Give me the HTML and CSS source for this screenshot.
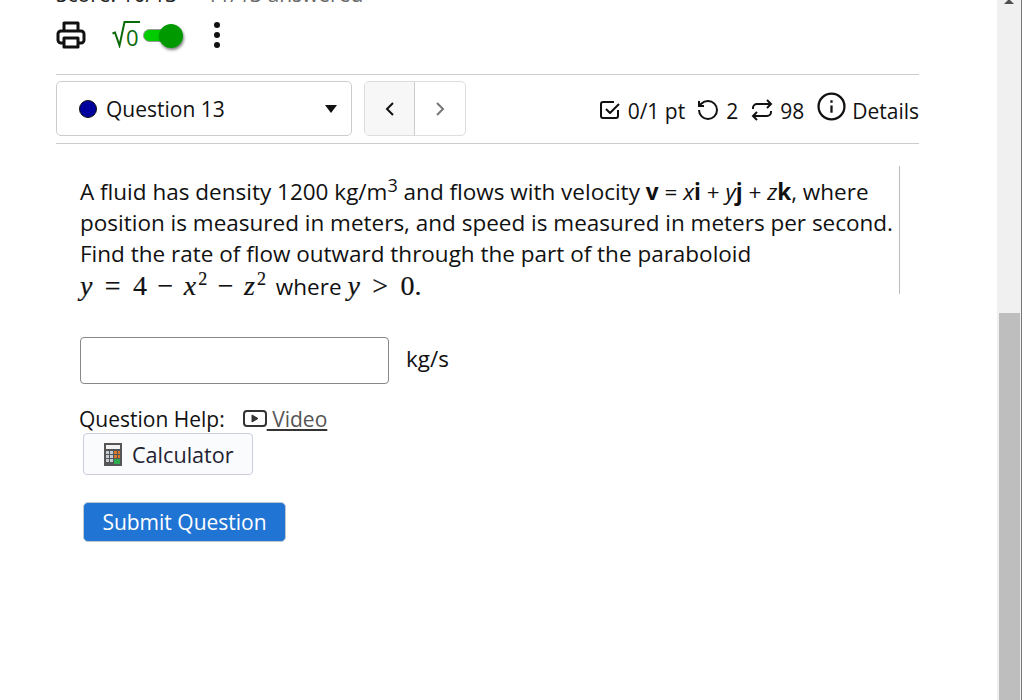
FILE: index.html
```html
<!DOCTYPE html>
<html lang="en">
<head>
    <meta charset="UTF-8">
    <meta name="viewport" content="width=device-width, initial-scale=1.0">
    <title>Question 13</title>
    <link rel="stylesheet" href="styles.css">
</head>
<body>
    <div class="page">
        <div class="main">
            <div class="score-row">
                <span class="score">Score: 10/13</span>
                <span class="answered">11/13 answered</span>
            </div>

            <div class="toolbar">
                <svg class="print-icon" width="30" height="30" viewBox="0 0 30 30" fill="none" stroke="#111" stroke-width="3" stroke-linejoin="round">
                    <path d="M8 11V3h14v8"/>
                    <path d="M8 23H5a3 3 0 0 1-3-3v-6a3 3 0 0 1 3-3h20a3 3 0 0 1 3 3v6a3 3 0 0 1-3 3h-3"/>
                    <rect x="8" y="18" width="14" height="9"/>
                </svg>
                <div class="math-toggle">
                    <svg class="root-sign" width="28" height="28" viewBox="0 0 28 28" fill="none" stroke="#0a6b0a" stroke-width="2">
                        <path d="M0.5 13.5L3 12.5l4.5 13L12.5 2H28"/>
                    </svg>
                    <span class="root-zero">0</span>
                    <span class="switch"><span class="knob"></span></span>
                </div>
                <div class="kebab"><i></i><i></i><i></i></div>
            </div>

            <div class="nav-row">
                <div class="q-select">
                    <span class="dot"></span>
                    <span class="q-label">Question 13</span>
                    <span class="caret"></span>
                </div>
                <div class="pager">
                    <div class="prev">
                        <svg width="12" height="14" viewBox="0 0 12 14" fill="none" stroke="#111" stroke-width="2"><path d="M9 1L3 7l6 6"/></svg>
                    </div>
                    <div class="next">
                        <svg width="12" height="14" viewBox="0 0 12 14" fill="none" stroke="#777" stroke-width="2"><path d="M3 1l6 6-6 6"/></svg>
                    </div>
                </div>
                <div class="meta">
                    <svg class="meta-icon" width="20" height="20" viewBox="0 0 20 20" fill="none" stroke="#111" stroke-width="2" stroke-linejoin="round">
                        <path d="M18 10v6a2 2 0 0 1-2 2H3a2 2 0 0 1-2-2V4a2 2 0 0 1 2-2h11"/>
                        <path d="M6 9l4 4 9-9"/>
                    </svg>
                    <span class="points">0/1 pt</span>
                    <svg class="meta-icon undo" width="24" height="24" viewBox="0 0 24 24" fill="none" stroke="#111" stroke-width="2">
                        <path d="M3 12a9 9 0 1 0 9-9 9.750 9.750 0 0 0-6.740 2.740L3 8"/>
                        <path d="M3 3v5h5"/>
                    </svg>
                    <span class="retries">2</span>
                    <svg class="meta-icon repeat" width="24" height="24" viewBox="0 0 24 24" fill="none" stroke="#111" stroke-width="2">
                        <path d="M17 2l4 4-4 4"/>
                        <path d="M3 11v-1a4 4 0 0 1 4-4h14"/>
                        <path d="M7 22l-4-4 4-4"/>
                        <path d="M21 13v1a4 4 0 0 1-4 4H3"/>
                    </svg>
                    <span class="attempts">98</span>
                    <svg class="info-icon" width="29" height="29" viewBox="0 0 28 28" fill="none" stroke="#111" stroke-width="2.2">
                        <circle cx="14" cy="14" r="12.5"/>
                        <path d="M14 13v7"/>
                        <path d="M14 8v2.400"/>
                    </svg>
                    <span class="details">Details</span>
                </div>
            </div>

            <div class="question">
                <div class="question-text">
                    <div>A fluid has density 1200 kg/m<sup class="cube">3</sup> and flows with velocity <b>v</b> = <em>x</em><b>i</b> + <em>y</em><b>j</b> + <em>z</em><b>k</b>, where</div>
                    <div>position is measured in meters, and speed is measured in meters per second.</div>
                    <div>Find the rate of flow outward through the part of the paraboloid</div>
                    <div class="math-line">
                        <span class="math"><i>y</i><span class="rel">=</span>4<span class="bin">&minus;</span><i>x</i><sup>2</sup><span class="bin">&minus;</span><i>z</i><sup>2</sup></span> <span class="where">where</span> <span class="math"><i>y</i><span class="rel">&gt;</span>0.</span>
                    </div>
                </div>
            </div>

            <div class="answer-row">
                <div class="answer-box"></div>
                <span class="unit">kg/s</span>
            </div>

            <div class="help-row">
                <span>Question Help:</span>
                <svg class="video-icon" width="24" height="18" viewBox="0 0 24 18" fill="none" stroke="#333" stroke-width="2">
                    <rect x="1" y="1" width="22" height="15" rx="3"/>
                    <path d="M9 5l6 3.500-6 3.500z" fill="#333" stroke-width="1"/>
                </svg>
                <a class="video-link" href="#">&nbsp;Video</a>
            </div>

            <button class="calc-btn" type="button">
                <svg width="18" height="23" viewBox="0 0 18 23">
                    <rect width="18" height="23" fill="#555"/>
                    <rect x="2" y="2" width="14" height="4" fill="#f2f2f2"/>
                    <g fill="#c5cdd6">
                        <rect x="2" y="8" width="3" height="3"/><rect x="6" y="8" width="3" height="3"/>
                        <rect x="2" y="12" width="3" height="3"/><rect x="6" y="12" width="3" height="3"/>
                        <rect x="2" y="16" width="3" height="3"/><rect x="6" y="16" width="3" height="3"/>
                    </g>
                    <g fill="#d9772b">
                        <rect x="10" y="8" width="3" height="3"/><rect x="14" y="8" width="2" height="3"/>
                        <rect x="10" y="12" width="3" height="3"/><rect x="14" y="12" width="2" height="3"/>
                    </g>
                    <rect x="10" y="16" width="6" height="5" fill="#2fa84f"/>
                </svg>
                <span>Calculator</span>
            </button>

            <button class="submit-btn" type="button">Submit Question</button>
        </div>

        <div class="scrollbar">
            <span class="arrow-up"></span>
            <div class="thumb"></div>
        </div>
    </div>
</body>
</html>
```

FILE: styles.css
```css
* {
    margin: 0;
    padding: 0;
    box-sizing: border-box;
}

html, body {
    height: 700px;
    overflow: hidden;
}

body {
    font-family: "Open Sans", sans-serif;
    font-size: 22.4px;
    color: #111;
    background: white;
}

.page {
    display: flex;
    height: 700px;
}

.main {
    width: 997px;
    padding: 0 78px 0 56px;
}

.score-row {
    height: 8px;
    overflow: hidden;
    display: flex;
    align-items: flex-end;
    font-size: 21px;
    line-height: 28px;
    gap: 29px;
    color: #222;
}

.answered {
    color: #6a6a6a;
}

.toolbar {
    height: 67px;
    padding-top: 12px;
    display: flex;
    align-items: flex-start;
    border-bottom: 1px solid #ccc;
}

.math-toggle {
    display: flex;
    margin-left: 26px;
    height: 30px;
    align-items: center;
}

.root-sign {
    margin-top: -2px;
}

.root-zero {
    margin-left: -14px;
    width: 14px;
    font-size: 22px;
    line-height: 28px;
    margin-top: 3px;
    color: #0a6b0a;
}

.switch {
    position: relative;
    width: 32px;
    height: 13px;
    margin-left: 3px;
    border-radius: 7px;
    background: #00cc00;
    border: 1px solid #999;
}

.knob {
    position: absolute;
    right: -9px;
    top: -6px;
    width: 24px;
    height: 24px;
    border-radius: 50%;
    background: #009900;
    box-shadow: 1px 2px 3px rgba(0, 0, 0, 0.5);
}

.kebab {
    margin-left: 39px;
    display: flex;
    flex-direction: column;
    gap: 4px;
    padding-top: 2px;
}

.kebab i {
    display: block;
    width: 6px;
    height: 6px;
    border-radius: 50%;
    background: #111;
}

.nav-row {
    height: 69px;
    padding-top: 6px;
    padding-bottom: 7px;
    display: flex;
    align-items: stretch;
    border-bottom: 1px solid #ccc;
}

.q-select {
    width: 296px;
    height: 55px;
    display: flex;
    align-items: center;
    padding: 0 14px 0 22px;
    gap: 9px;
    font-size: 21px;
    border: 1px solid #ccc;
    border-radius: 5px;
}

.q-label {
    margin-top: 1px;
}

.dot {
    width: 18px;
    height: 18px;
    border-radius: 50%;
    background: #00009c;
    border: 1px solid #111;
}

.caret {
    margin-left: auto;
    border-left: 6px solid transparent;
    border-right: 6px solid transparent;
    border-top: 8px solid #111;
}

.pager {
    display: flex;
    margin-left: 12px;
    height: 55px;
    border: 1px solid #ddd;
    border-radius: 5px;
    overflow: hidden;
}

.prev, .next {
    width: 50px;
    display: flex;
    align-items: center;
    justify-content: center;
}

.prev {
    background: #f7f7f7;
    border-right: 1px solid #ccc;
}

.meta {
    margin-left: auto;
    display: flex;
    align-items: center;
    font-size: 21px;
    height: 55px;
    padding-top: 4px;
}

.meta-icon {
    flex: none;
    margin-top: -2px;
}

.points {
    margin-left: 8px;
}

.undo {
    margin-left: 11px;
}

.retries {
    margin-left: 6px;
}

.repeat {
    margin-left: 12px;
}

.attempts {
    margin-left: 6px;
}

.info-icon {
    margin-left: 13px;
    margin-top: -9px;
    flex: none;
}

.details {
    margin-left: 6px;
}

.question {
    margin-top: 22px;
    width: 844px;
    height: 128px;
    padding: 10px 0 0 24px;
    border-right: 1px solid #bbb;
}

.question-text {
    font-size: 22.5px;
    line-height: 31px;
    white-space: nowrap;
}

.cube {
    font-size: 18px;
    line-height: 0;
}

.math-line {
    margin-top: 1px;
}

.math {
    font-family: "Liberation Serif", serif;
    font-size: 28px;
    -webkit-text-stroke: 0.2px #111;
}

.math sup {
    font-size: 18px;
    line-height: 0;
    margin-left: 2px;
}

.rel {
    margin: 0 12.4px;
}

.bin {
    margin: 0 10.5px;
}

.where {
    margin-left: 4px;
}

.answer-row {
    margin-top: 43px;
    padding-left: 24px;
    display: flex;
    align-items: flex-start;
}

.answer-box {
    width: 309px;
    height: 47px;
    border: 1px solid #888;
    border-radius: 4px;
}

.unit {
    margin-left: 17px;
    line-height: 44px;
}

.help-row {
    margin-top: 21px;
    padding-left: 23px;
    height: 28px;
    display: flex;
    align-items: center;
    font-size: 21px;
}

.video-icon {
    margin-left: 18px;
}

.video-link {
    color: #555;
    text-decoration: underline;
    text-decoration-color: #333;
}

.calc-btn {
    margin: 0 0 0 27px;
    width: 170px;
    height: 42px;
    display: flex;
    align-items: center;
    gap: 10px;
    padding-left: 20px;
    font-family: inherit;
    font-size: 21.6px;
    color: #223;
    background: #fafbfc;
    border: 1px solid #ccd;
    border-radius: 4px;
}

.submit-btn {
    display: block;
    margin: 27px 0 0 27px;
    width: 203px;
    height: 40px;
    font-family: inherit;
    font-size: 21px;
    color: white;
    background: #1f74d4;
    border: 1px solid #c0c8d0;
    border-radius: 5px;
}

.scrollbar {
    position: relative;
    width: 25px;
    height: 700px;
    background: #f0f0f0;
    border-right: 1px solid #777;
}

.arrow-up {
    position: absolute;
    left: 7px;
    top: -1px;
    border-left: 5px solid transparent;
    border-right: 5px solid transparent;
    border-bottom: 5px solid #505050;
}

.thumb {
    position: absolute;
    left: 2px;
    top: 313px;
    width: 21px;
    height: 387px;
    background: #bebebe;
}
```
